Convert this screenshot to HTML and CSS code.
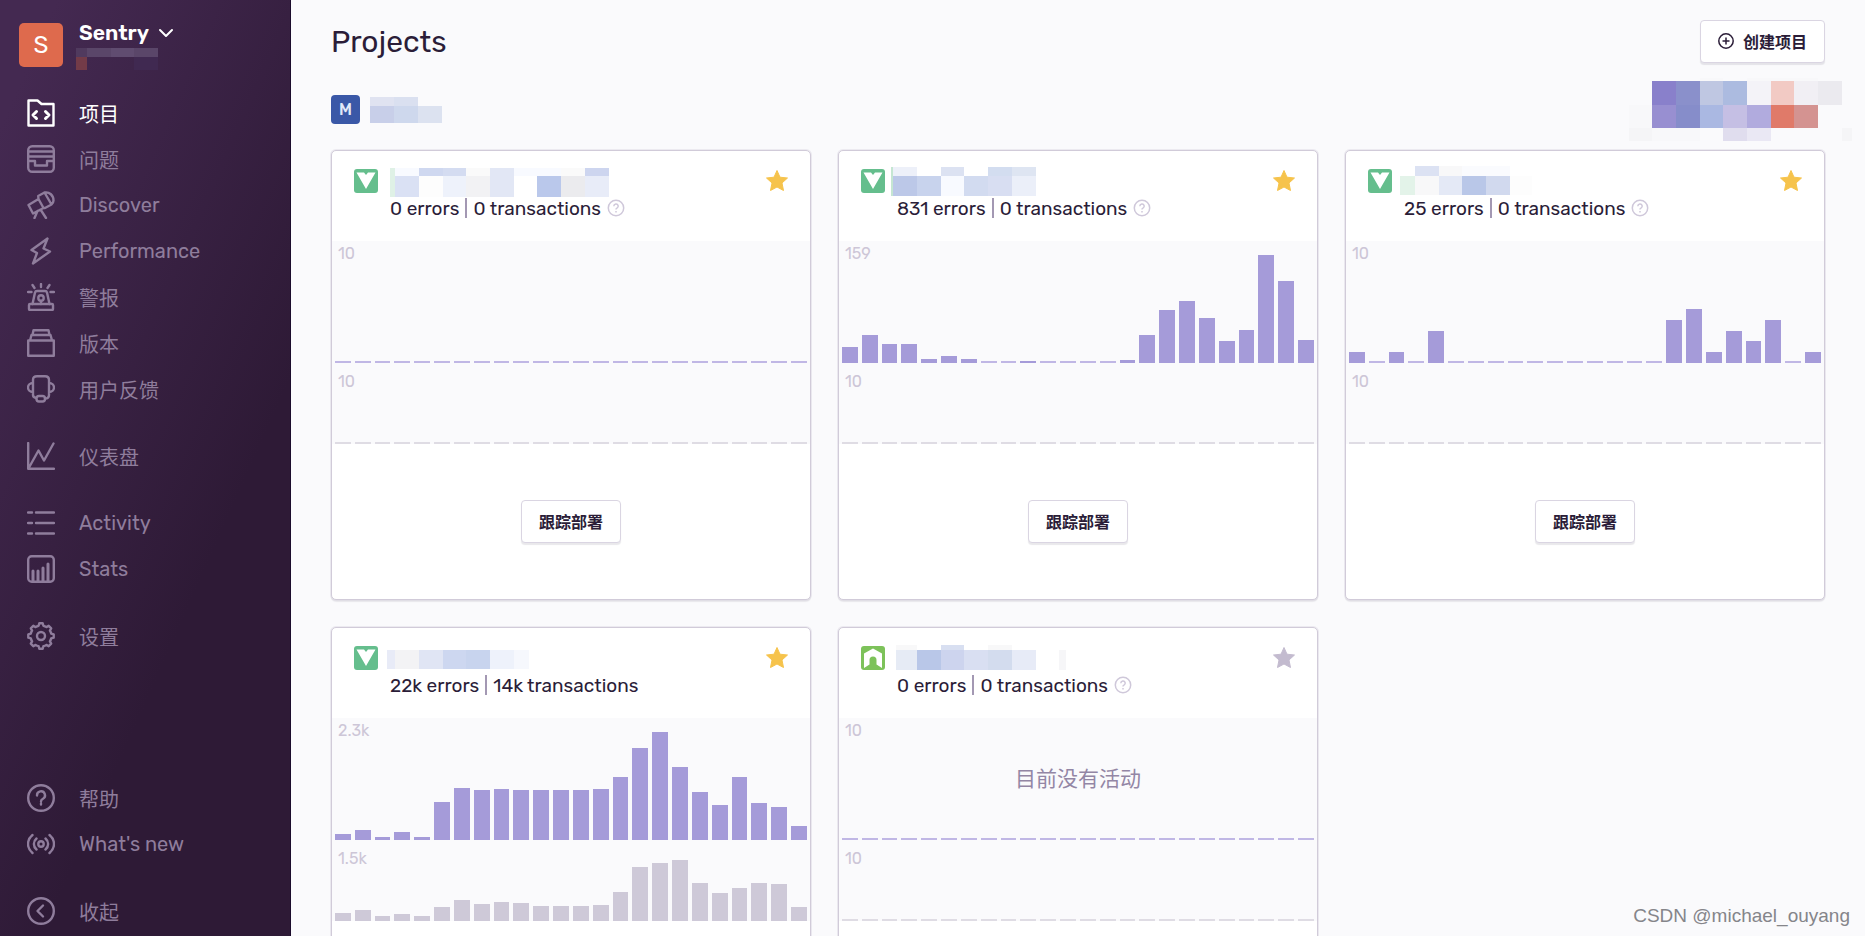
FILE: index.html
```html
<!DOCTYPE html>
<html lang="zh-CN">
<head>
<meta charset="utf-8">
<title>Projects - Sentry</title>
<link rel="stylesheet" href="styles.css">
</head>
<body>
<svg class="defs" aria-hidden="true">
  <symbol id="vue" viewBox="0 0 24 24"><rect width="24" height="24" rx="3" fill="#65be8d"/><path d="M2.500 3.500h7.500l2 2.500 2-2.500h7.500L12 20z" fill="#fff"/></symbol>
  <symbol id="nuxt" viewBox="0 0 24 24"><rect width="24" height="24" rx="3" fill="#7dc25a"/><path d="M12 2.500 21 7.500V22l-5.500-3.500V14a3.500 3.500 0 0 0-7 0v4.500L3 22V7.500z" fill="#fff"/></symbol>
  <symbol id="star" viewBox="0 0 22 21"><path d="M11 .5l3 6.700 7.500.8-5.500 5 1.500 7.500L11 17l-6.500 3.500L6 13 .5 8 8 7.200z" fill="currentColor" stroke="currentColor" stroke-linejoin="round"/></symbol>
  <symbol id="help" viewBox="0 0 18 18"><g fill="none" stroke="currentColor" stroke-width="1.500"><circle cx="9" cy="9" r="7.700"/><path d="M6.800 7.200a2.200 2.200 0 1 1 3.200 2c-.8.4-1 .7-1 1.300M9 12v1.500"/></g></symbol>
</svg>
<div class="app">
  <aside class="sidebar">
    <button class="org" type="button">
      <span class="org-avatar">S</span>
      <span class="org-info">
        <span class="org-name">Sentry
          <svg class="chevron" viewBox="0 0 16 10" fill="none" stroke="currentColor" stroke-width="2" stroke-linecap="round" stroke-linejoin="round"><path d="M2 2l6 6 6-6"/></svg>
        </span>
        <svg class="org-user" viewBox="0 0 96 23" shape-rendering="crispEdges"><path fill="#503a5e" d="M0 1h11v9H0z"/><path fill="#5a4669" d="M11 1h24v9H11zM58 1h24v9H58z"/><path fill="#604c70" d="M35 1h23v9H35z"/><path fill="#733b48" d="M0 10h11v13H0z"/><path fill="#402951" d="M58 10h24v13H58z"/></svg>
      </span>
    </button>
    <nav class="nav">
      <div class="nav-group">
        <a class="nav-item active" href="#"><svg viewBox="0 0 28 28"><path d="M1.500 1.500h9l4 3.500h12v21.500h-25z"/><path d="M9.500 12.500 6 16l3.500 3.500M18.500 12.500 22 16l-3.500 3.500" stroke-width="3"/></svg>项目</a>
        <a class="nav-item" href="#"><svg viewBox="0 0 28 28"><rect x="1.200" y="1.200" width="25.600" height="25.600" rx="4"/><path d="M1 6.500h26M1 11.500h26M1 16h7v4.500h12V16h7"/></svg>问题</a>
        <a class="nav-item" href="#"><svg viewBox="0 0 28 28"><path d="M1.500 14l10-6 5 9-10.500 5.500zM11.500 8l-.3-3 6.300-3.500 7 12-6.500 3.500-1.500 0M17.500 1.500c5-1 9 3 9 8 0 2-1 3-2 4M10.500 20 7.500 27M13.500 18.500 19 27"/></svg>Discover</a>
        <a class="nav-item" href="#"><svg viewBox="0 0 28 28"><path d="M20.500 1.500 4.500 13l5.500 3-4 10.500L23 14.500l-6.500-3z"/></svg>Performance</a>
        <a class="nav-item" href="#"><svg viewBox="0 0 28 28"><rect x="2" y="21" width="24" height="6" rx="1"/><path d="M5.500 21 8 9.500c.3-1.200 1-1.500 2-1.500h8c1 0 1.700.3 2 1.500L22.500 21M14 1v3M5.500 2l2 3M22.500 2l-2 3M1 9h3.500M23.500 9H27M14 18v3"/><circle cx="14" cy="15" r="2.700"/></svg>警报</a>
        <a class="nav-item" href="#"><svg viewBox="0 0 28 28"><path d="M1.200 11.500h25.600v15.300H1.200zM3 11.500 4.500 6h19l1.500 5.500M5.500 6l1-4.800h15l1 4.800"/></svg>版本</a>
        <a class="nav-item" href="#"><svg viewBox="0 0 28 28"><path d="M6 17V5c0-2.500 1.500-3.800 4-3.800h8c2.500 0 4 1.300 4 3.800v15c0 2-1.500 3.500-4 3.500M6 8c-3 0-5 2-5 4.500S3 17 6 17v3c0 1.500 1 2.500 3 3M22 8c3 0 5 2 5 4.500S25 17 22 17"/><rect x="9.500" y="21" width="8.500" height="5.500" rx="2.500"/></svg>用户反馈</a>
      </div>
      <div class="nav-group">
        <a class="nav-item" href="#"><svg viewBox="0 0 28 28"><path d="M1.200 1v25.800H27M2 25.500 11.500 8.500l5.500 10L26.500 1.500"/></svg>仪表盘</a>
      </div>
      <div class="nav-group">
        <a class="nav-item" href="#"><svg viewBox="0 0 28 28"><path d="M1 3.500h4M9 3.500h18M1 14h4M9 14h18M1 24.500h4M9 24.500h18"/></svg>Activity</a>
        <a class="nav-item" href="#"><svg viewBox="0 0 28 28"><rect x="1.200" y="1.200" width="25.600" height="25.600" rx="3.500"/><path d="M6 16v10M11 16v10M16 13v13M21 9v17" stroke-width="3"/></svg>Stats</a>
      </div>
      <div class="nav-group">
        <a class="nav-item" href="#"><svg viewBox="0 0 28 28"><circle cx="14" cy="14" r="4"/><path d="M11.600 3.800 12.300 1.300h3.400l.7 2.500a10 10 0 0 1 3 1.300l2.300-1.300 2.500 2.500-1.300 2.300a10 10 0 0 1 1.300 3l2.500.7v3.400l-2.500.7a10 10 0 0 1-1.300 3l1.300 2.300-2.500 2.500-2.300-1.300a10 10 0 0 1-3 1.300l-.7 2.500h-3.400l-.7-2.500a10 10 0 0 1-3-1.300l-2.300 1.300-2.500-2.500 1.300-2.300a10 10 0 0 1-1.300-3l-2.500-.7v-3.400l2.500-.7a10 10 0 0 1 1.300-3L3.800 6.300l2.500-2.500 2.300 1.300a10 10 0 0 1 3-1.300z"/></svg>设置</a>
      </div>
    </nav>
    <nav class="nav">
      <div class="nav-group">
        <a class="nav-item" href="#"><svg viewBox="0 0 28 28"><circle cx="14" cy="14" r="12.800"/><path d="M10 11.500a4 4 0 1 1 6 3.300c-1.400.7-2 1.400-2 2.700M14 19.500v1"/></svg>帮助</a>
        <a class="nav-item" href="#"><svg viewBox="0 0 28 28"><circle cx="14" cy="14" r="2.700"/><path d="M5.500 5c-6 5-6 13 0 18M22.500 5c6 5 6 13 0 18M9.500 8.500c-3.500 3-3.500 8 0 11M18.500 8.500c3.500 3 3.500 8 0 11"/></svg>What's new</a>
      </div>
      <div class="nav-group">
        <button class="nav-item" type="button"><svg viewBox="0 0 28 28"><circle cx="14" cy="14" r="12.800"/><path d="M16 8.500 10.500 14l5.500 5.500"/></svg>收起</button>
      </div>
    </nav>
  </aside>

  <main class="main">
    <header class="page-head">
      <h1>Projects</h1>
      <button class="btn" type="button"><svg viewBox="0 0 16 16" fill="none" stroke="currentColor" stroke-width="1.500"><circle cx="8" cy="8" r="7.200"/><path d="M8 4.500v7M4.500 8h7"/></svg>创建项目</button>
    </header>
    <div class="team">
      <span class="team-badge">M</span>
      <svg class="team-name" viewBox="0 0 72 26" shape-rendering="crispEdges"><path fill="#e0e3f1" d="M0 0h24v9H0z"/><path fill="#dae0f0" d="M24 0h24v9H24z"/><path fill="#c8cfe9" d="M0 9h24v17H0z"/><path fill="#ced8ed" d="M24 9h24v17H24z"/><path fill="#dce2f0" d="M48 9h24v17H48z"/></svg>
      <svg class="members" viewBox="0 0 223 63" shape-rendering="crispEdges"><path fill="#f8f8fa" d="M71 0h23v3H71zM118 0h71v3h-71zM0 27h23v23H0zM23 50h48v13H23z"/><path fill="#f5f5f7" d="M0 50h23v13H0zM213 50h10v13h-10z"/><path fill="#8980cb" d="M23 3h24v24H23z"/><path fill="#8a90cb" d="M47 3h24v24H47z"/><path fill="#bfc7e2" d="M71 3h23v24H71z"/><path fill="#acbbe0" d="M94 3h24v24H94z"/><path fill="#f4f3f8" d="M118 3h24v24h-24z"/><path fill="#f2cac4" d="M142 3h23v24h-23z"/><path fill="#f1eff4" d="M165 3h24v24h-24z"/><path fill="#ebeaef" d="M189 3h24v24h-24z"/><path fill="#988fd1" d="M23 27h24v23H23z"/><path fill="#868dca" d="M47 27h24v23H47z"/><path fill="#aab8e2" d="M71 27h23v23H71z"/><path fill="#c5bfe4" d="M94 27h24v23H94z"/><path fill="#b1abde" d="M118 27h24v23h-24z"/><path fill="#e07a69" d="M142 27h23v23h-23z"/><path fill="#d49391" d="M165 27h24v23h-24z"/><path fill="#e0ddee" d="M94 50h24v13H94z"/><path fill="#eae8f4" d="M118 50h24v13h-24z"/></svg>
    </div>

    <section class="cards">
      <article class="card">
        <div class="card-head">
          <svg class="platform"><use href="#vue"/></svg>
          <div class="summary">
            <svg class="name" viewBox="0 0 240 32" shape-rendering="crispEdges"><path fill="#dff1e6" d="M6 2h5v29H6z"/><path fill="#f8faff" d="M11 2h24v8H11zM130 2h47v29h-24V10h-23z"/><path fill="#cfd8f0" d="M35 2h24v8H35z"/><path fill="#d4dcf1" d="M59 2h23v8H59z"/><path fill="#fafafa" d="M82 2h24v8H82zM177 2h24v8h-24z"/><path fill="#e2e7f5" d="M106 2h24v29h-24z"/><path fill="#cdd5ef" d="M201 2h24v8h-24z"/><path fill="#dae1f4" d="M11 10h24v21H11z"/><path fill="#fdfdfd" d="M35 10h24v21H35z"/><path fill="#eef2fb" d="M59 10h23v21H59z"/><path fill="#f2f2f4" d="M82 10h24v21H82z"/><path fill="#bac8eb" d="M153 10h24v21h-24z"/><path fill="#ebebee" d="M177 10h24v21h-24z"/><path fill="#e8ecf8" d="M201 10h24v21h-24z"/></svg>
            <p class="stats"><a href="#">0 errors</a><i></i><a href="#">0 transactions</a><svg><use href="#help"/></svg></p>
          </div>
          <button class="star" type="button" aria-label="Bookmark"><svg><use href="#star"/></svg></button>
        </div>
        <div class="chart" data-bars="0,0,0,0,0,0,0,0,0,0,0,0,0,0,0,0,0,0,0,0,0,0,0,0"><span class="max">10</span></div>
        <div class="chart minor" data-bars="0,0,0,0,0,0,0,0,0,0,0,0,0,0,0,0,0,0,0,0,0,0,0,0"><span class="max">10</span></div>
        <div class="card-foot"><button class="btn" type="button">跟踪部署</button></div>
      </article>

      <article class="card">
        <div class="card-head">
          <svg class="platform"><use href="#vue"/></svg>
          <div class="summary">
            <svg class="name" viewBox="0 0 240 32" shape-rendering="crispEdges"><path fill="#c5e6d2" d="M0 1h2v29H0z"/><path fill="#edf0f9" d="M2 1h24v9H2z"/><path fill="#dce2f2" d="M50 1h23v9H50z"/><path fill="#d3ddf0" d="M97 1h24v9H97z"/><path fill="#dee5f2" d="M121 1h24v9h-24z"/><path fill="#bcc8e8" d="M2 10h24v20H2z"/><path fill="#c8d3ed" d="M26 10h24v20H26z"/><path fill="#f8faff" d="M50 10h23v20H50z"/><path fill="#d2dbf0" d="M73 10h24v20H73z"/><path fill="#d8def2" d="M97 10h24v20H97z"/><path fill="#ebeff9" d="M121 10h24v20h-24z"/></svg>
            <p class="stats"><a href="#">831 errors</a><i></i><a href="#">0 transactions</a><svg><use href="#help"/></svg></p>
          </div>
          <button class="star" type="button" aria-label="Bookmark"><svg><use href="#star"/></svg></button>
        </div>
        <div class="chart" data-bars="16,28,19,19,4,7,4,0,0,2,0,0,0,0,3,28,53,62,45,22,33,108,82,23"><span class="max">159</span></div>
        <div class="chart minor" data-bars="0,0,0,0,0,0,0,0,0,0,0,0,0,0,0,0,0,0,0,0,0,0,0,0"><span class="max">10</span></div>
        <div class="card-foot"><button class="btn" type="button">跟踪部署</button></div>
      </article>

      <article class="card">
        <div class="card-head">
          <svg class="platform"><use href="#vue"/></svg>
          <div class="summary">
            <svg class="name" viewBox="0 0 240 32" shape-rendering="crispEdges"><path fill="#e3f3e9" d="M2 10h15v19H2z"/><path fill="#dce2f3" d="M17 0h24v10H17z"/><path fill="#f8f8f9" d="M41 0h23v10H41zM17 10h24v19H17z"/><path fill="#fafbfe" d="M64 0h48v10H64z"/><path fill="#e4e9f6" d="M41 10h23v19H41z"/><path fill="#b9c7e8" d="M64 10h24v19H64z"/><path fill="#d1d9ee" d="M88 10h24v19H88z"/><path fill="#fdfdfd" d="M112 10h22v19h-22z"/></svg>
            <p class="stats"><a href="#">25 errors</a><i></i><a href="#">0 transactions</a><svg><use href="#help"/></svg></p>
          </div>
          <button class="star" type="button" aria-label="Bookmark"><svg><use href="#star"/></svg></button>
        </div>
        <div class="chart" data-bars="11,0,11,0,32,0,0,0,0,0,0,0,0,0,0,0,43,54,11,32,22,43,0,11"><span class="max">10</span></div>
        <div class="chart minor" data-bars="0,0,0,0,0,0,0,0,0,0,0,0,0,0,0,0,0,0,0,0,0,0,0,0"><span class="max">10</span></div>
        <div class="card-foot"><button class="btn" type="button">跟踪部署</button></div>
      </article>

      <article class="card">
        <div class="card-head">
          <svg class="platform"><use href="#vue"/></svg>
          <div class="summary">
            <svg class="name" viewBox="0 0 240 32" shape-rendering="crispEdges"><path fill="#e8ebf7" d="M3 7h8v19H3z"/><path fill="#f3f3f5" d="M11 7h24v19H11z"/><path fill="#e0e5f4" d="M35 7h24v19H35z"/><path fill="#cdd7f0" d="M59 7h23v19H59z"/><path fill="#c8d4ee" d="M82 7h24v19H82z"/><path fill="#eef2fb" d="M106 7h24v19h-24z"/><path fill="#f6f8fd" d="M130 7h15v19h-15z"/></svg>
            <p class="stats"><a href="#">22k errors</a><i></i><a href="#">14k transactions</a></p>
          </div>
          <button class="star" type="button" aria-label="Bookmark"><svg><use href="#star"/></svg></button>
        </div>
        <div class="chart" data-bars="6,10,3,8,3,38,52,50,51,50,50,50,50,51,63,92,108,73,48,35,63,37,33,14"><span class="max">2.3k</span></div>
        <div class="chart minor" data-bars="8,11,5,7,5,14,21,17,19,18,15,15,15,16,29,54,58,61,38,28,33,38,37,14"><span class="max">1.5k</span></div>
        <div class="card-foot"></div>
      </article>

      <article class="card">
        <div class="card-head">
          <svg class="platform"><use href="#nuxt"/></svg>
          <div class="summary">
            <svg class="name" viewBox="0 0 240 32" shape-rendering="crispEdges"><path fill="#f8f8f9" d="M5 2h21v5H5zM97 2h24v5H97z"/><path fill="#d8dff1" d="M50 2h23v5H50z"/><path fill="#e6ebf5" d="M5 7h21v20H5z"/><path fill="#b9c7e8" d="M26 7h24v20H26z"/><path fill="#cdd4ee" d="M50 7h23v20H50z"/><path fill="#d9dff2" d="M73 7h24v20H73z"/><path fill="#d3dcee" d="M97 7h24v20H97z"/><path fill="#e7ebf7" d="M121 7h24v20h-24z"/><path fill="#f6f6f8" d="M168 7h7v20h-7z"/></svg>
            <p class="stats"><a href="#">0 errors</a><i></i><a href="#">0 transactions</a><svg><use href="#help"/></svg></p>
          </div>
          <button class="star off" type="button" aria-label="Bookmark"><svg><use href="#star"/></svg></button>
        </div>
        <div class="chart" data-bars="0,0,0,0,0,0,0,0,0,0,0,0,0,0,0,0,0,0,0,0,0,0,0,0"><span class="max">10</span><p class="empty">目前没有活动</p></div>
        <div class="chart minor" data-bars="0,0,0,0,0,0,0,0,0,0,0,0,0,0,0,0,0,0,0,0,0,0,0,0"><span class="max">10</span></div>
        <div class="card-foot"></div>
      </article>
    </section>
  </main>
  <p class="watermark">CSDN @michael_ouyang</p>
</div>
<script src="charts.js"></script>
</body>
</html>
```
FILE: styles.css
```css
* { box-sizing: border-box; }

body {
  margin: 0;
  background: #fafafc;
  color: #2b1d38;
  font-family: Rubik, Inter, "Noto Sans CJK SC", sans-serif;
  font-size: 19px;
}

button {
  font: inherit;
  color: inherit;
  background: none;
  border: 0;
  padding: 0;
  text-align: left;
}

a { color: inherit; text-decoration: none; }
h1, p { margin: 0; }
svg { display: block; flex: none; }
.defs { position: absolute; width: 0; height: 0; }

.app {
  position: relative;
  display: flex;
  height: 100vh;
  overflow: hidden;
}

/* Sidebar */
.sidebar {
  flex: none;
  width: 291px;
  display: flex;
  flex-direction: column;
  justify-content: space-between;
  padding: 23px 0 2px;
  background: linear-gradient(294deg, #2e1a36 35%, #442951 92%);
  border-right: 1px solid #1b0c2c;
}

.org {
  display: flex;
  gap: 16px;
  height: 47px;
  padding-left: 19px;
}

.org-avatar {
  width: 44px;
  height: 44px;
  border-radius: 5px;
  background: #de6a4d;
  color: #fff;
  font-size: 24px;
  line-height: 44px;
  text-align: center;
}

.org-name {
  display: flex;
  align-items: center;
  gap: 9px;
  height: 24px;
  color: #fff;
  font-size: 21px;
  font-weight: 600;
  line-height: 20px;
  padding-bottom: 4px;
}

.chevron { width: 16px; height: 10px; }
.org-user { width: 96px; height: 23px; margin-left: -3px; }

.nav { display: flex; flex-direction: column; gap: 21px; }
.org + .nav { margin: 20px 0 auto; }
.nav-group { display: flex; flex-direction: column; }

.nav-item {
  display: flex;
  align-items: center;
  gap: 24px;
  height: 46px;
  padding-left: 27px;
  color: #8f7d9c;
  font-size: 20px;
}

.nav-item svg {
  width: 28px;
  height: 28px;
  fill: none;
  stroke: currentColor;
  stroke-width: 2.4;
  stroke-linecap: round;
  stroke-linejoin: round;
}

.nav-item.active { color: #fff; }

/* Page */
.main { flex: 1; min-width: 0; padding: 20px 40px; }

.page-head {
  display: flex;
  align-items: center;
  justify-content: space-between;
}

h1 { font-size: 30px; font-weight: 400; line-height: 36px; }

.btn {
  display: flex;
  align-items: center;
  gap: 9px;
  height: 43px;
  padding: 0 17px 2px;
  border: 1px solid #dad5e2;
  border-radius: 4px;
  background: #fff;
  box-shadow: 0 2px 1px rgba(43, 29, 56, .1);
  font-size: 16px;
  font-weight: 600;
}

.btn svg { width: 16px; height: 16px; }

.team {
  display: flex;
  align-items: center;
  gap: 10px;
  margin: 15px -27px 9px 0;
}

.team-badge {
  width: 29px;
  height: 29px;
  border-radius: 4px;
  background: #3a58a7;
  color: #e3e9f7;
  font-size: 16px;
  font-weight: 500;
  line-height: 29px;
  text-align: center;
}

.team-name { width: 72px; height: 26px; }
.members { width: 223px; height: 63px; margin-left: auto; }

.cards {
  display: grid;
  grid-template-columns: repeat(3, 1fr);
  gap: 27px;
}

.card {
  border: 1px solid #d1cbd9;
  border-radius: 5px;
  background: #fff;
  box-shadow: 0 0 0 1px rgba(209, 203, 217, .35), 0 2px 1px rgba(43, 29, 56, .08);
}

.card-head {
  display: flex;
  gap: 6px;
  height: 90px;
  padding: 15px 22px 0;
}

.platform { width: 24px; height: 24px; margin-top: 3px; }
.summary { flex: 1; }
.name { width: 240px; height: 32px; }

.stats {
  display: flex;
  align-items: center;
  gap: 6px;
  height: 20px;
  padding-left: 6px;
  white-space: nowrap;
}

.stats i { width: 2px; height: 20px; background: #a398b3; }
.stats svg { width: 18px; height: 18px; color: #cfc8da; }

.star { height: 21px; margin-top: 4px; color: #f6c34c; }
.star svg { width: 22px; height: 21px; }
.star.off { color: #c3bbcf; }

.chart {
  position: relative;
  display: flex;
  align-items: flex-end;
  gap: 4px;
  height: 122px;
  padding: 0 3px;
  background: #fafafc;
}

.chart.minor { height: 81px; }

.bar { flex: 1; min-height: 2px; background: #a59bd9; }
.bar.zero { background: #c0b7e5; }
.minor .bar { background: #cec9d8; }
.minor .bar.zero { background: #dfdce4; }

.max {
  position: absolute;
  top: 4px;
  left: 6px;
  color: #cdc6d7;
  font-size: 16px;
  line-height: 18px;
}

.minor .max { top: 10px; }

.empty {
  position: absolute;
  inset: 0;
  display: flex;
  align-items: center;
  justify-content: center;
  padding-bottom: 4px;
  color: #9386a5;
  font-size: 21px;
}

.card-foot {
  display: flex;
  align-items: center;
  justify-content: center;
  height: 155px;
}

.watermark {
  position: absolute;
  right: 15px;
  bottom: 8px;
  color: #85858a;
  font-family: "Liberation Sans", sans-serif;
  font-size: 19px;
  line-height: 24px;
}
```
FILE: charts.js
```js
document.querySelectorAll('.chart').forEach(function (chart) {
  chart.dataset.bars.split(',').forEach(function (value) {
    var bar = document.createElement('span');
    bar.className = value === '0' ? 'bar zero' : 'bar';
    bar.style.height = value + 'px';
    chart.appendChild(bar);
  });
});
```
